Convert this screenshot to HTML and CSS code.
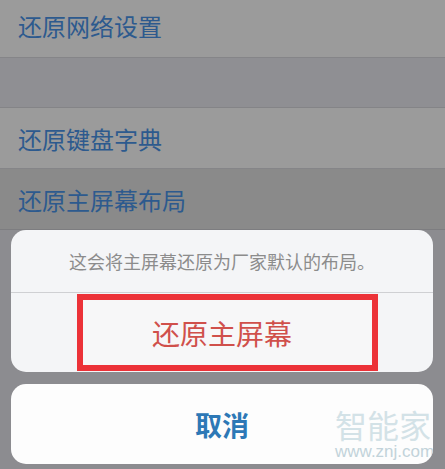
FILE: index.html
```html
<!doctype html>
<html lang="zh-CN">
<head>
<meta charset="UTF-8">
<title>还原</title>
<link rel="stylesheet" href="styles.css">
</head>
<body>
	<div class="screen">
		<!-- 设置列表 -->
		<div class="list">
			<div class="row row_first">还原网络设置</div>
			<div class="gap"></div>
			<div class="row">还原键盘字典</div>
			<div class="row row_active">还原主屏幕布局</div>
			<div class="rest"></div>
		</div>

		<!-- 弹出菜单 -->
		<div class="sheet">
			<div class="card">
				<div class="msg">这会将主屏幕还原为厂家默认的布局。</div>
				<div class="action">
					<div class="mark">还原主屏幕</div>
				</div>
			</div>
			<div class="card cancel">
				<span class="cancel_text">取消</span>
				<div class="wm">
					<div class="wm_big">智能家</div>
					<div class="wm_small">www.znj.com</div>
				</div>
			</div>
		</div>
	</div>
</body>
</html>
```

FILE: styles.css
```css
body{
	margin:0;
	font-family:"Noto Sans CJK SC", "Noto Sans", sans-serif;
}
.screen{
	position:relative;
	width:445px; height:469px;
	overflow:hidden;
	background-color:#8c8c90;
}
.list{
	display:flex; flex-direction:column;
}
.row{
	height:60px;
	display:flex; align-items:center;
	padding-left:18px;
	font-size:24px; color:#2d5a8e;
	background-color:#9b9b9b;
	border-bottom:1px solid #858588;
}
.row_first{
	box-sizing:border-box; height:58px;
	padding-bottom:6px;
}
.row_active{
	background-color:#8a8a8a;
	border-bottom:1px solid #7d7d80;
}
.gap{
	height:49px;
	background-color:#8f8f93;
	border-bottom:1px solid #848487;
}
.rest{
	flex:1;
}
.sheet{
	position:absolute;
	left:11px; right:12px; bottom:5px;
	display:flex; flex-direction:column; gap:12px;
}
.card{
	background-color:#f4f5f7;
	border-radius:15px;
	overflow:hidden;
}
.msg{
	height:62px;
	display:flex; align-items:center; justify-content:center;
	font-size:18px; color:#8c8c8c;
	border-bottom:1px solid #cfd0d3;
}
.action{
	height:79px;
	padding:1px 0 0 66px;
	box-sizing:border-box;
}
.mark{
	width:301px; height:77px;
	box-sizing:border-box;
	border:6px solid #ec3238;
	padding-right:11px;
	display:flex; align-items:center; justify-content:center;
	font-size:28px; color:#d0504b;
	background-color:#f7f7f8;
}
.cancel{
	position:relative;
	height:80px;
	display:flex; align-items:center; justify-content:center;
	background-color:#fdfdfd;
}
.cancel_text{
	font-size:27px; font-weight:bold; color:#2d78b6;
}
.wm{
	position:absolute;
	left:324px; top:24px;
	width:120px;
	white-space:nowrap;
}
.wm_big{
	font-size:32px; line-height:32px;
	color:#d3e2e7;
}
.wm_small{
	margin-top:3px;
	font-size:17px; line-height:18px;
	color:#c2d3da;
	font-family:"Liberation Sans", sans-serif;
}
```
